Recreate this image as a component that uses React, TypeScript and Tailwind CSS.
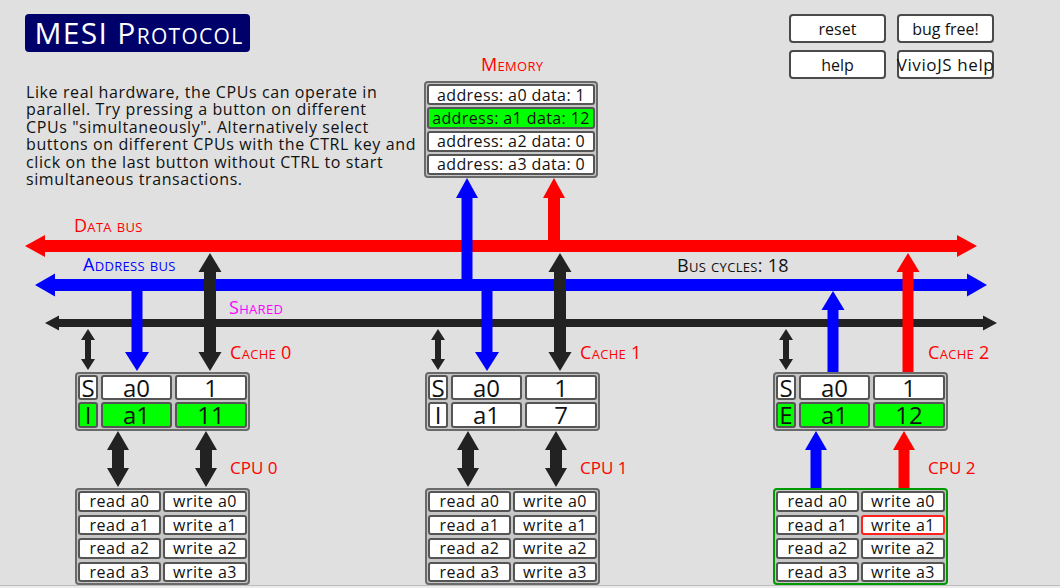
import React from "react";

type Pt = [number, number];
const pts = (p: Pt[]) => p.map(([x, y]) => `${x},${y}`).join(" ");

function hArrow(x1: number, x2: number, yc: number, t: number, hh: number, hl: number): string {
  return pts([
    [x1, yc], [x1 + hl, yc - hh], [x1 + hl, yc - t / 2], [x2 - hl, yc - t / 2], [x2 - hl, yc - hh],
    [x2, yc], [x2 - hl, yc + hh], [x2 - hl, yc + t / 2], [x1 + hl, yc + t / 2], [x1 + hl, yc + hh],
  ]);
}

// vertical arrow from ya (top) to yb (bottom); heads on top and/or bottom
function vArrow(x: number, ya: number, yb: number, t: number, hw: number, hl: number, top: boolean, bottom: boolean): string {
  const p: Pt[] = [];
  if (top) {
    p.push([x, ya], [x + hw, ya + hl], [x + t / 2, ya + hl]);
  } else {
    p.push([x + t / 2, ya]);
  }
  if (bottom) {
    p.push([x + t / 2, yb - hl], [x + hw, yb - hl], [x, yb], [x - hw, yb - hl], [x - t / 2, yb - hl]);
  } else {
    p.push([x + t / 2, yb], [x - t / 2, yb]);
  }
  if (top) {
    p.push([x - t / 2, ya + hl], [x - hw, ya + hl]);
  } else {
    p.push([x - t / 2, ya]);
  }
  return pts(p);
}

const RED = "#ff0000";
const BLUE = "#0000ff";
const BLK = "#222222";

function Diagram() {
  const cacheOffsets = [0, 350];
  return (
    <svg className="absolute left-0 top-0" width={1060} height={588} viewBox="0 0 1060 588">
      {/* buses */}
      <polygon points={hArrow(25, 977, 246, 12, 11, 20)} fill={RED} />
      <polygon points={hArrow(35, 987, 285, 12, 11.5, 20)} fill={BLUE} />
      <polygon points={hArrow(45, 997, 323, 8, 7.5, 14)} fill={BLK} />
      {/* memory connections */}
      <polygon points={vArrow(467, 178, 281, 11, 11, 20, true, false)} fill={BLUE} />
      <polygon points={vArrow(554, 178, 241, 12, 11, 20, true, false)} fill={RED} />
      {cacheOffsets.map((o) => (
        <g key={o}>
          <polygon points={vArrow(88 + o, 329, 370, 6, 7, 11, true, true)} fill={BLK} />
          <polygon points={vArrow(137 + o, 290, 371, 11, 12, 19, false, true)} fill={BLUE} />
          <polygon points={vArrow(210 + o, 253, 371, 12, 11.5, 19, true, true)} fill={BLK} />
          <polygon points={vArrow(118 + o, 431, 487, 12, 11, 19, true, true)} fill={BLK} />
          <polygon points={vArrow(206 + o, 431, 487, 12, 11, 19, true, true)} fill={BLK} />
        </g>
      ))}
      {/* cache 2 */}
      <polygon points={vArrow(786, 329, 370, 6, 7, 11, true, true)} fill={BLK} />
      <polygon points={vArrow(833, 291, 373, 11, 11.5, 19, true, false)} fill={BLUE} />
      <polygon points={vArrow(908, 253, 373, 11, 11.5, 19, true, false)} fill={RED} />
      <polygon points={vArrow(816, 431, 489, 11, 11, 19, true, false)} fill={BLUE} />
      <polygon points={vArrow(904, 431, 489, 11, 11, 19, true, false)} fill={RED} />
    </svg>
  );
}

function Cell({ children, green, red }: { children: React.ReactNode; green?: boolean; red?: boolean }) {
  return (
    <div
      className={
        "flex items-center justify-center whitespace-nowrap rounded-[3px] border-2 leading-none " +
        (green ? "bg-[#00ff00] " : "bg-white ") +
        (red ? "border-[#ff2020]" : "border-[#555555]")
      }
    >
      {children}
    </div>
  );
}

type Line = { s: string; a: string; d: string; g?: boolean };

function CacheBox({ rows }: { rows: Line[] }) {
  return (
    <div className="mt-[11px] h-[59px] w-[175px] rounded-[4px] border-2 border-[#6a6a6a] bg-[#c6c6c6] p-px">
      <div className="grid h-full grid-cols-[20px_71px_72px] grid-rows-[25px_26px] gap-x-[3px] gap-y-[2px] text-[24px] text-[#111]">
        {rows.map((r, i) => (
          <React.Fragment key={i}>
            <Cell green={r.g}>{r.s}</Cell>
            <Cell green={r.g}>{r.a}</Cell>
            <Cell green={r.g}>{r.d}</Cell>
          </React.Fragment>
        ))}
      </div>
    </div>
  );
}

function CpuBox({ active, redCell }: { active?: boolean; redCell?: number }) {
  const items: string[] = [];
  for (let i = 0; i < 4; i++) {
    items.push(`read a${i}`, `write a${i}`);
  }
  return (
    <div
      className={
        "mt-[12px] h-[97px] w-[175px] rounded-[4px] border-2 bg-[#c6c6c6] p-px " +
        (active ? "border-[#009a00]" : "border-[#6a6a6a]")
      }
    >
      <div className="grid h-full grid-cols-[83px_84px] grid-rows-4 gap-x-[2px] gap-y-[3px] text-[16px] tracking-[0.5px] text-[#111]">
        {items.map((t, i) => (
          <Cell key={t} red={redCell === i}>
            {t}
          </Cell>
        ))}
      </div>
    </div>
  );
}

function Processor({ n, left, rows, active, redCell }: { n: number; left: number; rows: Line[]; active?: boolean; redCell?: number }) {
  return (
    <div className="absolute top-[343px] flex flex-col items-start" style={{ left }}>
      <div className="ml-[155px] h-[18px] whitespace-nowrap text-[18px] leading-none tracking-[0.3px] text-[#ff0000] [font-variant:small-caps]">
        Cache {n}
      </div>
      <CacheBox rows={rows} />
      <div className="ml-[155px] mt-[28px] h-[17px] whitespace-nowrap text-[17px] leading-none text-[#ff0000]">
        CPU {n}
      </div>
      <CpuBox active={active} redCell={redCell} />
    </div>
  );
}

const label = "absolute text-[18px] leading-none tracking-[0.3px] [font-variant:small-caps] whitespace-nowrap";

export default function App() {
  return (
    <div
      className="relative h-[588px] w-[1060px] overflow-hidden bg-[#e0e0e0] text-[#111]"
      style={{ fontFamily: "'Open Sans', 'Noto Sans', sans-serif" }}
    >
      {/* bottom strip */}
      <div className="absolute left-0 top-[585px] h-[3px] w-full border-t border-[#bcbcbc] bg-[#ececec]" />

      {/* header */}
      <div className="flex justify-between pl-[25px] pr-[66px] pt-[14px]">
        <div className="flex flex-col items-start">
          <div className="flex h-[38px] w-[225px] items-center justify-center rounded-[4px] bg-[#00006b] pl-[3px] text-[30px] leading-none tracking-[1.3px] text-white [font-variant:small-caps]">
            MESI Protocol
          </div>
          <p className="mt-[32px] whitespace-nowrap pl-px text-[16px] leading-[17.4px] tracking-[0.6px] text-[#111]">
            Like real hardware, the CPUs can operate in
            <br />
            parallel. Try pressing a button on different
            <br />
            CPUs "simultaneously". Alternatively select
            <br />
            buttons on different CPUs with the CTRL key and
            <br />
            click on the last button without CTRL to start
            <br />
            simultaneous transactions.
          </p>
        </div>
        <div className="grid grid-cols-[97px_97px] grid-rows-[29px_29px] gap-x-[11px] gap-y-[7px] text-[16px]">
          {["reset", "bug free!", "help", "VivioJS help"].map((b) => (
            <div
              key={b}
              className={
                "flex items-center justify-center whitespace-nowrap rounded-[4px] border-2 border-[#4a4a4a] bg-white leading-none text-[#111] " +
                (b === "VivioJS help" ? "text-[17px] tracking-[0.6px]" : "")
              }
            >
              {b}
            </div>
          ))}
        </div>
      </div>

      <Diagram />

      {/* memory */}
      <div className={label + " left-[481px] top-[55px] text-[#ff0000]"}>Memory</div>
      <div className="absolute left-[424px] top-[81px] h-[97px] w-[174px] rounded-[4px] border-2 border-[#6a6a6a] bg-[#c6c6c6] p-px">
        <div className="grid h-full grid-rows-4 gap-y-[2px] text-[16px] tracking-[0.4px] text-[#111]">
          <Cell>address: a0 data: 1</Cell>
          <Cell green>address: a1 data: 12</Cell>
          <Cell>address: a2 data: 0</Cell>
          <Cell>address: a3 data: 0</Cell>
        </div>
      </div>

      {/* bus labels */}
      <div className={label + " left-[74px] top-[216px] text-[#ff0000]"}>Data bus</div>
      <div className={label + " left-[83px] top-[255px] text-[#0000ff]"}>Address bus</div>
      <div className={label + " left-[229px] top-[298px] text-[#ff00ff]"}>Shared</div>
      <div className={label + " left-[677px] top-[256px] text-[#111]"}>Bus cycles: 18</div>

      <Processor
        n={0}
        left={75}
        rows={[
          { s: "S", a: "a0", d: "1" },
          { s: "I", a: "a1", d: "11", g: true },
        ]}
      />
      <Processor
        n={1}
        left={425}
        rows={[
          { s: "S", a: "a0", d: "1" },
          { s: "I", a: "a1", d: "7" },
        ]}
      />
      <Processor
        n={2}
        left={773}
        active
        redCell={3}
        rows={[
          { s: "S", a: "a0", d: "1" },
          { s: "E", a: "a1", d: "12", g: true },
        ]}
      />
    </div>
  );
}
